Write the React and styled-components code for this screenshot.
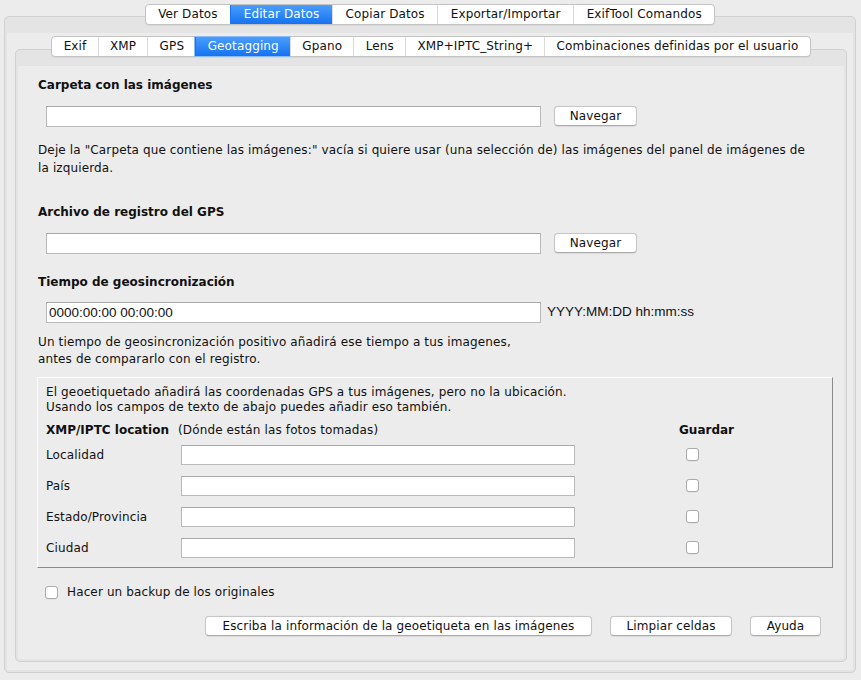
import React from "react";
import styled, { createGlobalStyle } from "styled-components";

const GlobalStyle = createGlobalStyle`
  body {
    margin: 0;
    background: #ececec;
    font-family: "DejaVu Sans", "Open Sans", sans-serif;
    font-size: 12px;
    letter-spacing: 0.13px;
    color: #111;
  }
`;

const topTabs = ["Ver Datos", "Editar Datos", "Copiar Datos", "Exportar/Importar", "ExifTool Comandos"];
const subTabs = [
  "Exif",
  "XMP",
  "GPS",
  "Geotagging",
  "Gpano",
  "Lens",
  "XMP+IPTC_String+",
  "Combinaciones definidas por el usuario",
];
const locationRows = ["Localidad", "País", "Estado/Provincia", "Ciudad"];

const Window = styled.div`
  width: 861px;
  height: 680px;
  box-sizing: border-box;
  padding: 4px 5px 7px 4px;
  display: flex;
  flex-direction: column;
`;

const TabRow = styled.div`
  display: flex;
  justify-content: center;
  position: relative;
  z-index: 1;
`;

const TabBar = styled.div`
  display: flex;
  height: 19px;
  background: #fff;
  border: 1px solid #c4c4c4;
  border-radius: 4px;
  box-shadow: 0 1px 1px rgba(0, 0, 0, 0.06);
`;

const Tab = styled.div`
  padding: 0 ${(p) => p.$pad || 11}px;
  line-height: 19px;
  white-space: nowrap;
  border-left: 1px solid #dadada;
  color: #111;

  &:first-child {
    border-left: none;
    border-radius: 3px 0 0 3px;
  }
  &:last-child {
    border-radius: 0 3px 3px 0;
  }

  ${(p) =>
    p.$active &&
    `
    background: linear-gradient(#4a9efc, #1673f1);
    color: #fff;
    border-left-color: #1673f1;
    box-shadow: ${p.$focus ? "0 0 0 1px #8cbcf6" : "none"};
  `}
`;

const Pane = styled.div`
  flex: 1;
  display: flex;
  flex-direction: column;
  margin-top: -9px;
  background: #e4e4e4;
  border: 1px solid #d0d0d0;
  border-radius: 5px;
  padding: 16px 2px 2px 2px;
`;

const PaneBody = styled.div`
  flex: 1;
  display: flex;
  flex-direction: column;
  background: #ececec;
  padding: 3px 6px 8px 8px;
`;

const InnerPane = styled(Pane)`
  margin-top: -8px;
`;

const Content = styled.div`
  flex: 1;
  background: #ececec;
  padding: 10px 0 0 20px;
`;

const Title = styled.div`
  font-weight: bold;
  letter-spacing: 0;
  line-height: 18px;
  margin-top: ${(p) => p.$mt || 0}px;
`;

const FieldRow = styled.div`
  display: flex;
  align-items: flex-start;
  margin-top: ${(p) => p.$mt || 0}px;
  margin-left: 8px;
`;

const TextInput = styled.div`
  box-sizing: border-box;
  width: ${(p) => p.$w}px;
  height: ${(p) => p.$h || 21}px;
  background: #fff;
  border: 1px solid #b9b9b9;
  border-top-color: #a9a9a9;
  font-family: "Liberation Sans", Arial, sans-serif;
  font-size: 13.5px;
  letter-spacing: 0;
  line-height: 19px;
  padding-left: 2px;
  color: #111;
`;

const Button = styled.div`
  box-sizing: border-box;
  width: ${(p) => p.$w}px;
  height: 20px;
  line-height: 18px;
  text-align: center;
  background: #fff;
  border: 1px solid #c6c6c6;
  border-bottom-color: #ababab;
  border-radius: 4px;
  box-shadow: 0 0.5px 1px rgba(0, 0, 0, 0.08);
  white-space: nowrap;
`;

const Hint = styled.div`
  font-family: "Liberation Sans", Arial, sans-serif;
  font-size: 13.5px;
  letter-spacing: 0;
  line-height: 19px;
  margin-left: 6px;
`;

const Para = styled.p`
  margin: ${(p) => p.$mt || 0}px 0 0 0;
  line-height: ${(p) => p.$lh || 18}px;
`;

const Group = styled.div`
  box-sizing: border-box;
  width: 796px;
  height: 191px;
  margin: 9px 0 0 -1px;
  border: 1px solid;
  border-color: #fdfdfd #8a8a8a #8a8a8a #fdfdfd;
  padding: 7px 0 0 8px;
`;

const GroupText = styled.p`
  margin: 0;
  line-height: 15px;
`;

const LocationGrid = styled.div`
  display: grid;
  grid-template-columns: 135px 394px 104px auto;
  grid-template-rows: 18px repeat(4, 31px);
  align-items: center;
  margin-top: 6px;
`;

const HeadCell = styled.div`
  grid-column: 1 / span 3;
  line-height: 18px;
  white-space: nowrap;

  b {
    letter-spacing: 0;
    margin-right: 9px;
  }
`;

const SaveHead = styled.div`
  font-weight: bold;
  letter-spacing: 0;
  line-height: 18px;
`;

const Label = styled.div`
  line-height: 18px;
`;

const Box = styled.div`
  box-sizing: border-box;
  width: 13px;
  height: 13px;
  background: #fff;
  border: 1px solid #aaaaaa;
  border-radius: 3px;
  box-shadow: 0 0.5px 0.5px rgba(0, 0, 0, 0.08);
  margin-left: ${(p) => p.$ml || 0}px;
`;

const CheckRow = styled.div`
  display: flex;
  align-items: center;
  gap: 9px;
  margin: 15px 0 0 7px;
  line-height: 18px;
`;

const ButtonRow = styled.div`
  display: flex;
  justify-content: flex-end;
  gap: 18px;
  margin: 15px 23px 0 0;
`;

export default function App() {
  return (
    <>
      <GlobalStyle />
      <Window>
        <TabRow>
          <TabBar>
            {topTabs.map((t) => (
              <Tab key={t} $pad={12.5} $active={t === "Editar Datos"}>
                {t}
              </Tab>
            ))}
          </TabBar>
        </TabRow>
        <Pane>
          <PaneBody>
            <TabRow>
              <TabBar>
                {subTabs.map((t) => (
                  <Tab key={t} $pad={11.25} $active={t === "Geotagging"} $focus>
                    {t}
                  </Tab>
                ))}
              </TabBar>
            </TabRow>
            <InnerPane>
              <Content>
                <Title>Carpeta con las imágenes</Title>
                <FieldRow $mt={12}>
                  <TextInput $w={495} />
                  <Button $w={83} style={{ marginLeft: 13 }}>
                    Navegar
                  </Button>
                </FieldRow>
                <Para $mt={14}>
                  Deje la "Carpeta que contiene las imágenes:" vacía si quiere usar (una selección de) las imágenes del panel de imágenes de
                  <br />
                  la izquierda.
                </Para>

                <Title $mt={26}>Archivo de registro del GPS</Title>
                <FieldRow $mt={12}>
                  <TextInput $w={495} />
                  <Button $w={83} style={{ marginLeft: 13 }}>
                    Navegar
                  </Button>
                </FieldRow>

                <Title $mt={19}>Tiempo de geosincronización</Title>
                <FieldRow $mt={11}>
                  <TextInput $w={495}>0000:00:00 00:00:00</TextInput>
                  <Hint>YYYY:MM:DD hh:mm:ss</Hint>
                </FieldRow>
                <Para $mt={11} $lh={17}>
                  Un tiempo de geosincronización positivo añadirá ese tiempo a tus imagenes,
                  <br />
                  antes de compararlo con el registro.
                </Para>

                <Group>
                  <GroupText>
                    El geoetiquetado añadirá las coordenadas GPS a tus imágenes, pero no la ubicación.
                    <br />
                    Usando los campos de texto de abajo puedes añadir eso también.
                  </GroupText>
                  <LocationGrid>
                    <HeadCell>
                      <b>XMP/IPTC location</b>(Dónde están las fotos tomadas)
                    </HeadCell>
                    <SaveHead>Guardar</SaveHead>
                    {locationRows.map((r) => (
                      <React.Fragment key={r}>
                        <Label>{r}</Label>
                        <TextInput $w={394} $h={20} />
                        <span />
                        <Box $ml={7} />
                      </React.Fragment>
                    ))}
                  </LocationGrid>
                </Group>

                <CheckRow>
                  <Box />
                  Hacer un backup de los originales
                </CheckRow>

                <ButtonRow>
                  <Button $w={387}>Escriba la información de la geoetiqueta en las imágenes</Button>
                  <Button $w={122}>Limpiar celdas</Button>
                  <Button $w={71}>Ayuda</Button>
                </ButtonRow>
              </Content>
            </InnerPane>
          </PaneBody>
        </Pane>
      </Window>
    </>
  );
}
